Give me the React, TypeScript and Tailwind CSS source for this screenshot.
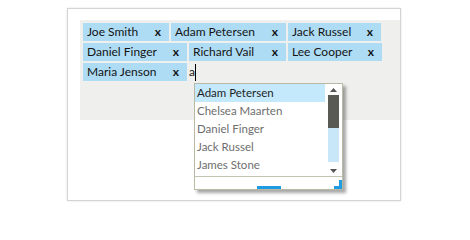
import React from "react";

const tags = [
  { name: "Joe Smith", w: "w-[86px]" },
  { name: "Adam Petersen", w: "w-[115px]" },
  { name: "Jack Russel", w: "w-[93px]" },
  { name: "Daniel Finger", w: "w-[104px]" },
  { name: "Richard Vail", w: "w-[97px]" },
  { name: "Lee Cooper", w: "w-[94px]" },
  { name: "Maria Jenson", w: "w-[104px]" },
];

const items = ["Adam Petersen", "Chelsea Maarten", "Daniel Finger", "Jack Russel", "James Stone"];

export default function App() {
  return (
    <div
      className="w-[470px] h-[209px] bg-white pl-[67px] pt-[8px]"
      style={{ fontFamily: "Lato, 'Open Sans', sans-serif" }}
    >
      <div className="w-[334px] h-[193px] border border-[#d4d4d4] shadow-[0_0_2px_rgba(0,0,0,0.12)] bg-white pl-[12px] pt-[11px]">
        <div className="w-[320px] h-[100px] bg-[#eff0ee] p-[3px] flex flex-wrap content-start gap-[2px]">
          {tags.map((t) => (
            <div
              key={t.name}
              className={`${t.w} h-[18px] bg-[#aedcf5] flex items-center justify-between pl-[4px] pr-[8px] text-[12px] leading-[18px] text-[#141414]`}
            >
              <span>{t.name}</span>
              <span className="font-bold text-[12px] leading-[18px]">x</span>
            </div>
          ))}
          <div className="relative h-[18px] flex items-center text-[12px] leading-[18px] text-[#141414]">
            <span>a</span>
            <span className="w-px h-[17px] bg-black" />
            <div className="absolute left-[5px] top-[20px] w-[149px] h-[107px] border border-[#b9b9a5] bg-white shadow-[3px_3px_3px_rgba(0,0,0,0.35)] flex flex-col z-10">
              <div className="flex h-[92px]">
                <div className="w-[130px] flex flex-col">
                  {items.map((it, i) => (
                    <div
                      key={it}
                      className={
                        i === 0
                          ? "h-[18px] leading-[18px] pl-[2px] text-[11.5px] bg-[#c4e9fc] text-[#1e1e1e]"
                          : "h-[18px] leading-[18px] pl-[2px] text-[11.5px] text-[#6e6e6e]"
                      }
                    >
                      {it}
                    </div>
                  ))}
                </div>
                <div className="ml-[3px] w-[11px] flex flex-col">
                  <div className="h-[11px] flex items-center justify-center">
                    <svg width="7" height="4" viewBox="0 0 7 4">
                      <path d="M3.5 0 L7 4 L0 4 Z" fill="#555" />
                    </svg>
                  </div>
                  <div className="h-[33px] bg-[#5a5a55]" />
                  <div className="h-[34px] bg-[#c8e7f8]" />
                  <div className="flex-1" />
                  <div className="h-[11px] flex items-center justify-center">
                    <svg width="7" height="4" viewBox="0 0 7 4">
                      <path d="M0 0 L7 0 L3.5 4 Z" fill="#555" />
                    </svg>
                  </div>
                </div>
              </div>
              <div className="relative flex-1 border-t border-[#c4c4b2] flex items-end justify-center">
                <div className="w-[24px] h-[3px] bg-[#1e9be2]" />
                <div className="absolute right-0 bottom-0 w-[3px] h-[9px] bg-[#1e9be2]" />
                <div className="absolute right-0 bottom-0 w-[8px] h-[3px] bg-[#1e9be2]" />
              </div>
            </div>
          </div>
        </div>
      </div>
    </div>
  );
}
